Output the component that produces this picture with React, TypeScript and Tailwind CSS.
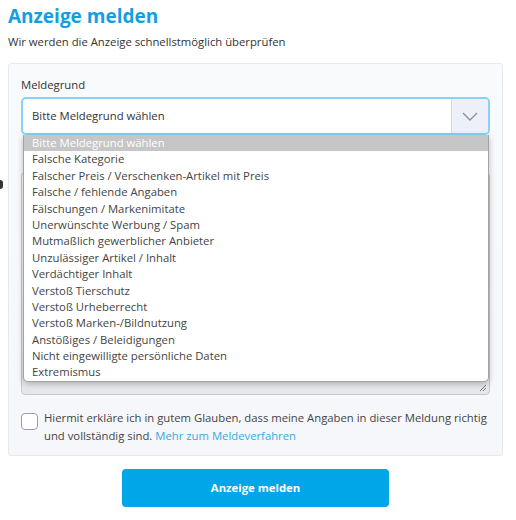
import React from 'react';

const reasons = [
  'Bitte Meldegrund wählen',
  'Falsche Kategorie',
  'Falscher Preis / Verschenken-Artikel mit Preis',
  'Falsche / fehlende Angaben',
  'Fälschungen / Markenimitate',
  'Unerwünschte Werbung / Spam',
  'Mutmaßlich gewerblicher Anbieter',
  'Unzulässiger Artikel / Inhalt',
  'Verdächtiger Inhalt',
  'Verstoß Tierschutz',
  'Verstoß Urheberrecht',
  'Verstoß Marken-/Bildnutzung',
  'Anstößiges / Beleidigungen',
  'Nicht eingewilligte persönliche Daten',
  'Extremismus',
];

export default function App() {
  return (
    <div
      className="relative w-[516px] h-[520px] bg-white px-2 pt-[1px] text-[#333]"
      style={{ fontFamily: '"Open Sans", "Liberation Sans", sans-serif' }}
    >
      {/* Header */}
      <h1 className="text-[19px] font-bold leading-[30px] text-[#129fe2]">Anzeige melden</h1>
      <p className="mt-[2px] text-[11.3px] leading-[18px] text-[#333]">
        Wir werden die Anzeige schnellstmöglich überprüfen
      </p>

      {/* Card */}
      <div className="mt-[12px] w-[495px] rounded-[3px] border border-[#e6e9ee] bg-gradient-to-b from-[#f9fafc] to-[#f5f7fa] px-[12px] pt-[12px] pb-[10px]">
        <label className="block text-[11.3px] leading-[18px] text-[#333]">Meldegrund</label>

        <div className="relative mt-[3px]">
          {/* Select */}
          <div className="flex h-[38px] w-[469px] overflow-hidden rounded-[5px] border-2 border-[#86d3f7] bg-white">
            <div className="flex flex-1 items-center pl-[9px] text-[11.3px] text-[#333]">
              Bitte Meldegrund wählen
            </div>
            <div className="flex w-[37px] items-center justify-center border-l border-[#d3d8e3] bg-[#edf0f8]">
              <svg width="16" height="9" viewBox="0 0 16 9" fill="none">
                <path d="M1 1l7 7 7-7" stroke="#8a8f9a" strokeWidth="1.3" />
              </svg>
            </div>
          </div>

          {/* Open dropdown list */}
          <div className="absolute left-[2px] top-[38px] z-10 w-[466px] overflow-hidden rounded-b-[5px] border border-t-0 border-[#a3a3a3] bg-white shadow-[0_2px_6px_rgba(0,0,0,0.25)]">
            {reasons.map((r, i) => (
              <div
                key={r}
                className={
                  i === 0
                    ? 'h-[16.4px] bg-[#c6c6c6] pl-[8px] text-[11.3px] leading-[16.4px] text-white'
                    : 'h-[16.4px] pl-[8px] text-[11.3px] leading-[16.4px] text-[#444]'
                }
              >
                {r}
              </div>
            ))}
          </div>
        </div>

        {/* Description field, mostly covered by the open list */}
        <div className="mt-[16px] h-[18px]" />
        <div className="relative mt-[3px] h-[223px] w-[469px] rounded-[4px] border border-[#c4c8cf] bg-gradient-to-b from-white to-[#e6e7ea]">
          <svg className="absolute bottom-[2px] right-[2px]" width="8" height="8" viewBox="0 0 8 8">
            <path d="M7 1L1 7M7 4L4 7" stroke="#777" strokeWidth="1" />
          </svg>
        </div>

        {/* Consent */}
        <div className="mt-[14px] flex gap-[6px]">
          <div className="mt-[4px] h-[17px] w-[17px] shrink-0 rounded-[4px] border border-[#9aa0a8] bg-white" />
          <p className="text-[11.3px] leading-[18px] text-[#444]">
            Hiermit erkläre ich in gutem Glauben, dass meine Angaben in dieser Meldung richtig und vollständig sind.{' '}
            <a className="text-[#3ca7e0]">Mehr zum Meldeverfahren</a>
          </p>
        </div>
      </div>

      {/* Submit */}
      <div className="mt-[13px] flex w-[495px] justify-center">
        <button className="h-[38px] w-[267px] rounded-[4px] bg-[#00a6e7] text-[11.3px] font-bold text-white">
          Anzeige melden
        </button>
      </div>

      <div className="absolute left-[-3px] top-[180px] h-[9px] w-[6px] rounded-full bg-[#333]" />
    </div>
  );
}
